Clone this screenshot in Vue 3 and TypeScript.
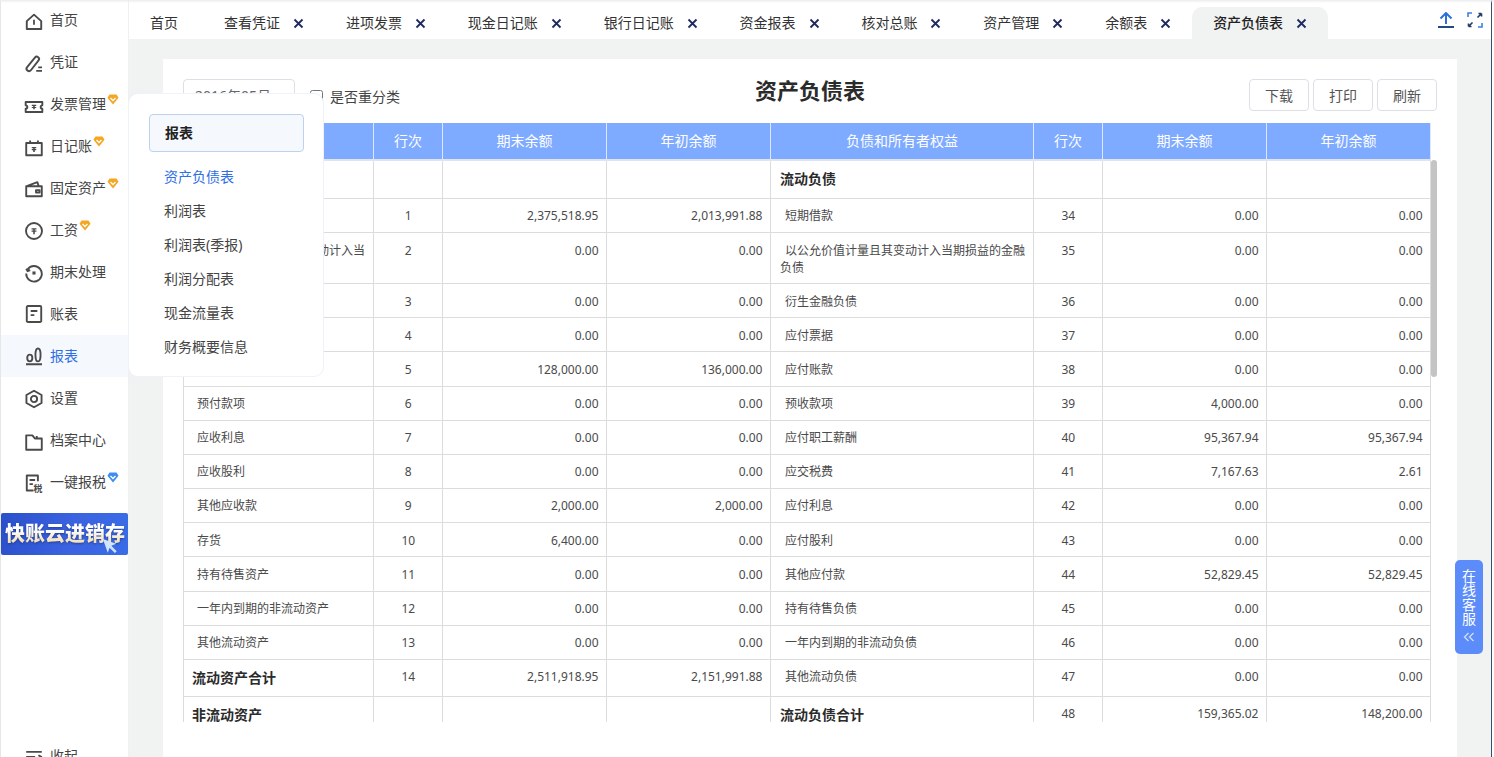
<script setup lang="ts">
interface NavItem { label: string; d: string; f?: string; badge?: string; active?: boolean; dy: number; tax?: boolean }
const nav: NavItem[] = [
  { label: '首页', dy: 2, d: 'M2.500 8.200 9 2.400l6.500 5.800v7.100h-13z', f: 'M8.200 7h1.600v4.500H8.200z' },
  { label: '凭证', dy: 2, d: 'M2.800 11.800 9.800 3.200a2.100 2.100 0 0 1 3.300 2.600L6.200 14.600a2.100 2.100 0 0 1-3.400-2.800zM11 15.200h5.200M12.800 12h3.400' },
  { label: '发票管理', dy: 2.500, badge: 'o', d: 'M1.500 4.500h15v3a1.500 1.500 0 0 0 0 3v3h-15v-3a1.500 1.500 0 0 0 0-3z', f: 'M7 7h4v1h-1.300v1H11v1H9.700v1H8.300v-1H7V9h1.300V8H7z' },
  { label: '日记账', dy: 1.500, badge: 'o', d: 'M2 4.500h14v11H2zM5.500 2.300v3M12.500 2.300v3', f: 'M7 8h4v1.200h-1.300v.8H11v1.100H9.700V12.500H8.300v-1.400H7V10h1.300v-.8H7z' },
  { label: '固定资产', dy: 1, badge: 'o', d: 'M2 6.500h14v9H2zM2.500 6.500 12 2.800l1.300 3.700M10.800 10h3.200v2.200h-3.200z' },
  { label: '工资', dy: 1, badge: 'o', d: 'M9 1.800a7.200 7.200 0 1 0 0 14.400A7.200 7.200 0 0 0 9 1.800z', f: 'M6.800 6.500h4.400v1.200H9.700v.9h1.500v1.100H9.700V12H8.300V9.700H6.800V8.600h1.500v-.9H6.800z' },
  { label: '期末处理', dy: 1, d: 'M3.200 5.800A7 7 0 1 1 2 9.500M2 5.200l1.300 2.200 2.300-.9', f: 'M7.600 7.600h2.800v2.800H7.600z' },
  { label: '账表', dy: 0, d: 'M3.500 1.800h11a1 1 0 0 1 1 1v12.400a1 1 0 0 1-1 1h-11a1 1 0 0 1-1-1V2.800a1 1 0 0 1 1-1zM6 6.300h6M6 10h3.300' },
  { label: '报表', dy: 0, active: true, d: 'M1.800 16.400h14.400M5.200 7.800c1.400 0 2.300 1 2.300 3s-.9 3-2.300 3-2.300-1-2.300-3 .9-3 2.300-3zM12.600 2.200c1.500 0 2.300 1.500 2.300 5.800s-.8 5.800-2.300 5.800-2.300-1.500-2.300-5.800.8-5.800 2.300-5.800z' },
  { label: '设置', dy: 1, d: 'M9 1.600 15.800 5.400v7.200L9 16.400l-6.800-3.800V5.400zM9 6.200a2.800 2.800 0 1 0 0 5.600 2.800 2.800 0 0 0 0-5.600z' },
  { label: '档案中心', dy: 1.500, d: 'M2 3h5.500l2.300 2.800H16V16H2zM11.500 5.800V3.500' },
  { label: '一键报税', dy: 1, badge: 'b', tax: true, d: 'M8.500 15.800H2.500V2.200h10v5.300M5 6.300h5M5 10h3' },
]
const collapse: NavItem = { label: '收起', dy: 2, d: 'M2 3.500h14M2 8h8M2 12.500h14M13 6.500 15.500 8 13 9.500' }

const tabs = ['首页', '查看凭证', '进项发票', '现金日记账', '银行日记账', '资金报表', '核对总账', '资产管理', '余额表', '资产负债表']
const menu = ['资产负债表', '利润表', '利润表(季报)', '利润分配表', '现金流量表', '财务概要信息']
const heads = ['资产', '行次', '期末余额', '年初余额', '负债和所有者权益', '行次', '期末余额', '年初余额']

interface Row { l: string; ln: string; la: string; lb: string; r: string; rn: string; ra: string; rb: string; kind?: string; lBold?: boolean; rBold?: boolean }
const z = '0.00'
const rows: Row[] = [
  { l: '流动资产', ln: '', la: '', lb: '', r: '流动负债', rn: '', ra: '', rb: '', kind: 'head', lBold: true, rBold: true },
  { l: '货币资金', ln: '1', la: '2,375,518.95', lb: '2,013,991.88', r: '短期借款', rn: '34', ra: z, rb: z },
  { l: '以公允价值计量且其变动计入当期损益的金融资产', ln: '2', la: z, lb: z, r: '以公允价值计量且其变动计入当期损益的金融负债', rn: '35', ra: z, rb: z, kind: 'tall' },
  { l: '衍生金融资产', ln: '3', la: z, lb: z, r: '衍生金融负债', rn: '36', ra: z, rb: z },
  { l: '应收票据', ln: '4', la: z, lb: z, r: '应付票据', rn: '37', ra: z, rb: z },
  { l: '应收账款', ln: '5', la: '128,000.00', lb: '136,000.00', r: '应付账款', rn: '38', ra: z, rb: z },
  { l: '预付款项', ln: '6', la: z, lb: z, r: '预收款项', rn: '39', ra: '4,000.00', rb: z },
  { l: '应收利息', ln: '7', la: z, lb: z, r: '应付职工薪酬', rn: '40', ra: '95,367.94', rb: '95,367.94' },
  { l: '应收股利', ln: '8', la: z, lb: z, r: '应交税费', rn: '41', ra: '7,167.63', rb: '2.61' },
  { l: '其他应收款', ln: '9', la: '2,000.00', lb: '2,000.00', r: '应付利息', rn: '42', ra: z, rb: z },
  { l: '存货', ln: '10', la: '6,400.00', lb: z, r: '应付股利', rn: '43', ra: z, rb: z },
  { l: '持有待售资产', ln: '11', la: z, lb: z, r: '其他应付款', rn: '44', ra: '52,829.45', rb: '52,829.45' },
  { l: '一年内到期的非流动资产', ln: '12', la: z, lb: z, r: '持有待售负债', rn: '45', ra: z, rb: z },
  { l: '其他流动资产', ln: '13', la: z, lb: z, r: '一年内到期的非流动负债', rn: '46', ra: z, rb: z },
  { l: '流动资产合计', ln: '14', la: '2,511,918.95', lb: '2,151,991.88', r: '其他流动负债', rn: '47', ra: z, rb: z, kind: 'total', lBold: true },
  { l: '非流动资产', ln: '', la: '', lb: '', r: '流动负债合计', rn: '48', ra: '159,365.02', rb: '148,200.00', kind: 'total', lBold: true, rBold: true },
]
</script>

<template>
  <div class="app">
    <aside class="side">
      <div v-for="n in nav" :key="n.label" class="nav" :class="{ 'nav--on': n.active }">
        <svg class="nav-ico" viewBox="0 0 18 18" :style="{ top: 11 + n.dy + 'px' }">
          <path :d="n.d" />
          <path v-if="n.f" class="fill" :d="n.f" />
          <text v-if="n.tax" x="8.500" y="17" class="tax">税</text>
        </svg>
        <span class="nav-label">{{ n.label }}</span>
        <svg v-if="n.badge" class="badge" viewBox="0 0 12 11">
          <path :fill="n.badge === 'o' ? '#f5a623' : '#3b8df2'" d="M2.500.5h7l2 3.200L6 10.500.5 3.700z" />
          <path d="M3.500 4 6 6.500 8.500 4" fill="none" stroke="#fff" stroke-width="1.300" />
        </svg>
      </div>
      <div class="promo">
        <span class="promo-text">快账云进销存</span>
        <svg class="promo-cursor" viewBox="0 0 18 18">
          <path d="M1 1l15 5.500-5.500 2.200L16.500 15l-2 2-6-6L6.500 16.500z" fill="#cfe4ff" />
        </svg>
      </div>
      <div class="nav nav--end">
        <svg class="nav-ico" viewBox="0 0 18 18" :style="{ top: 11 + collapse.dy + 'px' }"><path :d="collapse.d" /></svg>
        <span class="nav-label">{{ collapse.label }}</span>
      </div>
    </aside>

    <main class="main">
      <header class="tabs">
        <div
          v-for="(t, i) in tabs"
          :key="t"
          class="tab"
          :class="{ 'tab--first': i === 0, 'tab--on': i === tabs.length - 1 }"
        >
          <span>{{ t }}</span>
          <svg v-if="i > 0" class="tab-x" viewBox="0 0 11 11">
            <path d="M1.500 1.500l8 8M9.500 1.500l-8 8" />
          </svg>
        </div>
        <div class="tools">
          <svg class="tool" viewBox="1 1 16 16">
            <path d="M9 13V2M3.500 7.500 9 2l5.500 5.500" fill="none" stroke="#2b6fd8" stroke-width="2" />
            <path d="M1 16h16" stroke="#1f4a86" stroke-width="2" />
          </svg>
          <svg class="tool" viewBox="1 1 16 16" fill="none" stroke-width="1.600">
            <path d="M6 2H2v4M16 12v4h-4" stroke="#3f7fe0" />
            <path d="M11.500 6.500 15.500 2.500M15.500 2.500h-3M15.500 2.500v3M6.500 11.500l-4 4M2.500 15.500h3M2.500 15.500v-3" stroke="#1f3a66" />
          </svg>
        </div>
      </header>

      <section class="body">
        <div class="card">
          <div class="bar">
            <div class="bar-left">
              <div class="date">2016年05月</div>
              <label class="check"><input type="checkbox" />是否重分类</label>
            </div>
            <h1 class="title">资产负债表</h1>
            <div class="bar-right">
              <button class="btn">下载</button>
              <button class="btn">打印</button>
              <button class="btn">刷新</button>
            </div>
          </div>

          <div class="sheet">
            <div class="grid thead">
              <div v-for="(h, i) in heads" :key="i" class="th">{{ h }}</div>
            </div>
            <div class="tbody">
              <div v-for="(r, i) in rows" :key="i" class="grid row" :class="r.kind ? 'row--' + r.kind : ''">
                <div class="td name" :class="{ bold: r.lBold }">{{ r.l }}</div>
                <div class="td mid">{{ r.ln }}</div>
                <div class="td num">{{ r.la }}</div>
                <div class="td num">{{ r.lb }}</div>
                <div class="td name name--right" :class="{ bold: r.rBold }">{{ r.r }}</div>
                <div class="td mid">{{ r.rn }}</div>
                <div class="td num">{{ r.ra }}</div>
                <div class="td num">{{ r.rb }}</div>
              </div>
            </div>
            <div class="thumb"></div>
          </div>
        </div>
      </section>
    </main>
    <div class="edge"></div>

    <div class="pop">
      <div class="pop-head">报表</div>
      <div v-for="(m, i) in menu" :key="m" class="pop-item" :class="{ 'pop-item--on': i === 0 }">{{ m }}</div>
    </div>

    <div class="service">
      <span class="service-text">在线客服</span>
      <svg class="service-ico" viewBox="0 0 12 10">
        <path d="M5.500 1 1.500 5l4 4M10.500 1l-4 4 4 4" fill="none" stroke="#cfe0ff" stroke-width="1.300" />
      </svg>
    </div>
  </div>
</template>

<style>
html, body { margin: 0; height: 100%; overflow: hidden; background: #fff; }
</style>

<style scoped>
.app {
  position: relative;
  display: flex;
  width: 1494px;
  height: 757px;
  overflow: hidden;
  font-family: "Noto Sans", "Noto Sans CJK SC", sans-serif;
  color: #333;
  background: #fff;
}
.app::before {
  content: "";
  position: absolute;
  inset: 0 0 auto 0;
  height: 3px;
  background: linear-gradient(#ececec, rgba(255, 255, 255, 0));
  z-index: 5;
}

/* sidebar */
.side {
  flex: 0 0 129px;
  box-sizing: border-box;
  height: 778px;
  margin-top: -1px;
  display: flex;
  flex-direction: column;
  background: #fff;
  border-left: 1px solid #e6e6e6;
  border-right: 1px solid #f0f0f0;
}
.nav {
  position: relative;
  flex: 0 0 42px;
  display: flex;
  align-items: center;
  font-size: 14px;
  color: #444;
}
.nav--on { background: #f5f9fe; color: #2f6fe4; }
.nav--end { margin-top: auto; }
.nav-ico {
  position: absolute;
  left: 23px;
  width: 20px;
  height: 20px;
}
.nav-ico path {
  fill: none;
  stroke: #4a4a4a;
  stroke-width: 1.700;
  stroke-linejoin: round;
}
.nav-ico path.fill { fill: #4a4a4a; stroke: none; }
.nav-ico .tax { font-size: 8px; font-weight: 700; fill: #4a4a4a; }
.nav-label { margin-left: 49px; line-height: 20px; }
.badge { width: 12px; height: 11px; margin: -10px 0 0 1px; }
.promo {
  position: relative;
  flex: 0 0 42px;
  margin: 10px 0 0;
  box-sizing: border-box;
  display: flex;
  align-items: center;
  padding-left: 4px;
  border-radius: 2px;
  background: linear-gradient(100deg, #2a4fcb 0%, #3b63e0 55%, #3a6ce8 100%);
  overflow: hidden;
}
.promo-text {
  font-size: 20px;
  font-weight: 900;
  line-height: 24px;
  white-space: nowrap;
  background: linear-gradient(#ffffff 30%, #f3dfae 90%);
  -webkit-background-clip: text;
  background-clip: text;
  color: transparent;
  filter: drop-shadow(0 1px 1px rgba(20, 40, 120, 0.6));
}
.promo-cursor { position: absolute; left: 101px; bottom: 1px; width: 16px; height: 16px; }

/* main */
.main {
  flex: 1;
  min-width: 0;
  display: flex;
  flex-direction: column;
  background: #f1f2f2;
}
.tabs {
  flex: 0 0 39px;
  display: flex;
  align-items: flex-end;
  background: #fff;
  font-size: 14px;
  color: #333;
}
.tab {
  position: relative;
  box-sizing: border-box;
  height: 32px;
  padding: 0 20.900px 2px 21px;
  display: flex;
  align-items: center;
  white-space: nowrap;
}
.tab--first { padding-right: 25px; }
.tab--on { background: #f1f2f2; border-radius: 10px 10px 0 0; font-weight: 500; color: #222; }
.tab-x {
  width: 11px;
  height: 11px;
  margin-left: 13px;
  margin-top: 3px;
  fill: none;
  stroke: #1e2a5c;
  stroke-width: 1.800;
}
.tools {
  margin-left: auto;
  align-self: flex-start;
  display: flex;
  gap: 13px;
  margin-top: 12px;
  margin-right: 8px;
}
.tool { width: 16px; height: 16px; }
.body { flex: 1; min-height: 0; padding: 20px 34px 0; }
.card {
  box-sizing: border-box;
  height: 100%;
  padding: 20px 20px 0;
  background: #fff;
}
.bar {
  height: 44px;
  display: grid;
  grid-template-columns: 1fr auto 1fr;
}
.bar-left { display: flex; align-items: flex-start; }
.date {
  box-sizing: border-box;
  width: 112px;
  height: 34px;
  padding-left: 11px;
  line-height: 32px;
  font-size: 14px;
  color: #666;
  border: 1px solid #dcdfe6;
  border-radius: 4px;
}
.check {
  height: 34px;
  margin-left: 15px;
  display: flex;
  align-items: center;
  font-size: 14px;
  color: #444;
}
.check input { width: 13px; height: 13px; margin: 0 7px 0 0; }
.title {
  margin: -1px 0 0;
  font-size: 22px;
  font-weight: 700;
  line-height: 24px;
  color: #2b2b2b;
}
.bar-right { display: flex; justify-content: flex-end; align-items: flex-start; gap: 4px; }
.btn {
  width: 60px;
  height: 32px;
  padding: 0;
  font: inherit;
  font-size: 14px;
  color: #555;
  background: #fff;
  border: 1px solid #dcdfe6;
  border-radius: 4px;
}

/* sheet */
.sheet { position: relative; width: 1254px; }
.grid {
  display: grid;
  grid-template-columns: 190px 69px 164px 164px 263px 69px 164px 164px;
  width: 1248px;
  box-sizing: border-box;
  padding-left: 1px;
}
.thead {
  height: 38px;
  background: linear-gradient(#7eaaff 36px, #e0e4ec 36px);
}
.th {
  box-sizing: border-box;
  height: 36px;
  line-height: 36px;
  text-align: center;
  font-size: 14px;
  color: #fff;
  border-right: 1px solid #dce8ff;
}
.tbody { height: 561px; overflow: hidden; }
.row {
  height: 34.170px;
  border-left: 1px solid #dcdcdc;
  padding-left: 0;
  font-size: 12px;
  color: #4a4a4a;
}
.row--head { height: 38px; }
.row--tall { height: 51px; }
.row--total { height: 37px; }
.td {
  box-sizing: border-box;
  padding: 8.400px 7.500px 0 8px;
  line-height: 17.500px;
  border-right: 1px solid #dcdcdc;
  border-bottom: 1px solid #dcdcdc;
}
.name { text-indent: 5px; }
.name--right { padding-left: 9px; }
.name.bold {
  padding-top: 7px;
  text-indent: 0;
  font-size: 14px;
  font-weight: 700;
  line-height: 21px;
  color: #2b2b2b;
}
.mid { text-align: center; }
.num { text-align: right; }
.thumb {
  position: absolute;
  left: 1248px;
  top: 37px;
  width: 6px;
  height: 217px;
  border-radius: 3px;
  background: #c4c4c4;
}
.edge {
  flex: 0 0 3px;
  box-sizing: border-box;
  background: #fff;
  border-left: 1px solid #3d4f66;
}

/* popover */
.pop {
  position: absolute;
  left: 128px;
  top: 93px;
  box-sizing: border-box;
  width: 196px;
  height: 284px;
  padding: 20px 20px 0;
  background: #fff;
  border: 1px solid #edf2fb;
  border-radius: 10px;
  z-index: 4;
}
.pop-head {
  box-sizing: border-box;
  width: 155px;
  height: 38px;
  margin-bottom: 8px;
  padding-left: 15px;
  line-height: 36px;
  font-size: 14px;
  font-weight: 700;
  color: #222;
  background: #f5f9fe;
  border: 1px solid #bcd2ee;
  border-radius: 4px;
}
.pop-item {
  height: 34px;
  padding-left: 15px;
  line-height: 34px;
  font-size: 14px;
  color: #444;
}
.pop-item--on { color: #2f6fe4; }

/* service */
.service {
  position: absolute;
  left: 1455px;
  top: 560px;
  box-sizing: border-box;
  width: 28px;
  height: 94px;
  padding-top: 9px;
  display: flex;
  flex-direction: column;
  align-items: center;
  background: #5b8cf9;
  border-radius: 5px;
  z-index: 4;
}
.service-text {
  width: 14px;
  font-size: 14px;
  line-height: 14.400px;
  color: #fff;
  text-align: center;
}
.service-ico { width: 12px; height: 10px; margin-top: 5px; }
</style>
